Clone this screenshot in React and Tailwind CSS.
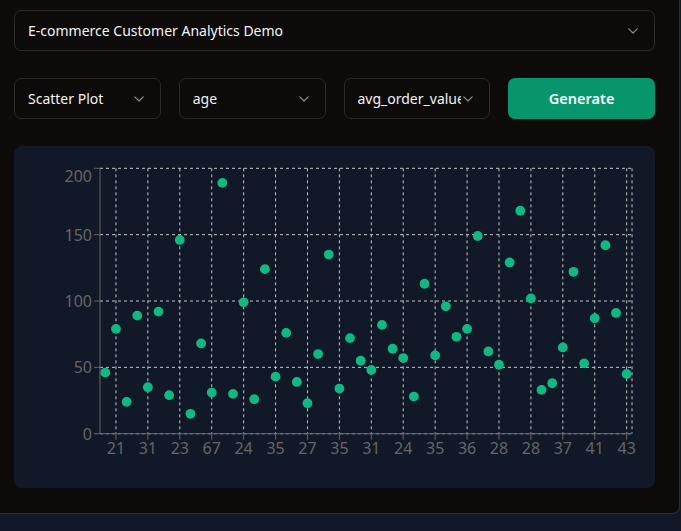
import React from 'react';

const values = [
  46, 79, 24, 89, 35, 92, 29, 146, 15, 68,
  31, 189, 30, 99, 26, 124, 43, 76, 39, 23,
  60, 135, 34, 72, 55, 48, 82, 64, 57, 28,
  113, 59, 96, 73, 79, 149, 62, 52, 129, 168,
  102, 33, 38, 65, 122, 53, 87, 142, 91, 45,
];

// age labels shown every 3rd point (index 1, 4, 7, ...)
const ageLabels = [21, 31, 23, 67, 24, 35, 27, 35, 31, 24, 35, 36, 28, 28, 37, 41, 43];

const ChevronDown = () => (
  <svg width="10" height="6" viewBox="0 0 10 6" fill="none" className="shrink-0">
    <polyline points="0.8,0.8 5,5 9.2,0.8" stroke="#8b8b8b" strokeWidth="1.2" strokeLinecap="round" strokeLinejoin="round" />
  </svg>
);

const SelectBox = ({ label }) => (
  <div className="h-[41px] flex items-center gap-[2px] pl-[13px] pr-[16px] rounded-[7px] border border-[#292929] bg-[#0c0b0a]">
    <span className="flex-1 min-w-0 overflow-hidden whitespace-nowrap text-[14px] text-gray-100">{label}</span>
    <ChevronDown />
  </div>
);

const ScatterChart = () => {
  const left = 86;
  const right = 618;
  const top = 22.3;
  const bottom = 287.7;
  const band = (right - left) / values.length;
  const xAt = (i) => left + band * (i + 0.5);
  const yAt = (v) => bottom - (v * (bottom - top)) / 200;
  const yTicks = [0, 50, 100, 150, 200];
  const xTicks = ageLabels.map((label, k) => ({ i: 1 + k * 3, label }));

  return (
    <svg width="641" height="342" viewBox="0 0 641 342" className="block">
      {/* grid */}
      <g stroke="#c4c4c4" strokeDasharray="3 3" strokeWidth="1">
        {yTicks.map((t) => (
          <line key={'h' + t} x1={left} x2={right} y1={yAt(t)} y2={yAt(t)} />
        ))}
        {xTicks.map(({ i }) => (
          <line key={'v' + i} x1={xAt(i)} x2={xAt(i)} y1={top} y2={bottom} />
        ))}
        <line x1={right} x2={right} y1={top} y2={bottom} />
      </g>

      {/* y axis */}
      <line x1={left} x2={left} y1={top} y2={bottom} stroke="#666" />
      {yTicks.map((t) => (
        <g key={'yt' + t}>
          <line x1={left - 6} x2={left} y1={yAt(t)} y2={yAt(t)} stroke="#666" />
          <text x={left - 8} y={t === 200 ? yAt(t) + 14 : yAt(t) + 6} textAnchor="end" fill="#666" fontSize="16">
            {t}
          </text>
        </g>
      ))}

      {/* x axis */}
      <line x1={left} x2={right} y1={bottom} y2={bottom} stroke="#666" />
      {xTicks.map(({ i, label }) => (
        <g key={'xt' + i}>
          <line x1={xAt(i)} x2={xAt(i)} y1={bottom} y2={bottom + 6} stroke="#666" />
          <text x={xAt(i)} y={bottom + 20} textAnchor="middle" fill="#666" fontSize="16">
            {label}
          </text>
        </g>
      ))}

      {/* points */}
      {values.map((v, i) => (
        <circle key={i} cx={xAt(i)} cy={yAt(v)} r="4.9" fill="#10b981" />
      ))}
    </svg>
  );
};

export default function App() {
  return (
    <div className="min-h-screen bg-[#111827] font-['Noto_Sans',sans-serif]">
      <div className="w-[680px] h-[514px] bg-[#0c0b0a] border-r border-b border-[#2e2e2e] rounded-br-lg pl-[14px] pr-[24px] pt-[10px] flex flex-col gap-[27px]">
        <SelectBox label="E-commerce Customer Analytics Demo" />

        <div className="grid grid-cols-4 gap-[18px]">
          <SelectBox label="Scatter Plot" />
          <SelectBox label="age" />
          <SelectBox label="avg_order_value" />
          <button className="h-[41px] rounded-[7px] bg-[#07966b] text-white text-[14.5px] font-semibold">
            Generate
          </button>
        </div>

        <div className="h-[342px] rounded-lg bg-[#111827] overflow-hidden">
          <ScatterChart />
        </div>
      </div>
    </div>
  );
}
